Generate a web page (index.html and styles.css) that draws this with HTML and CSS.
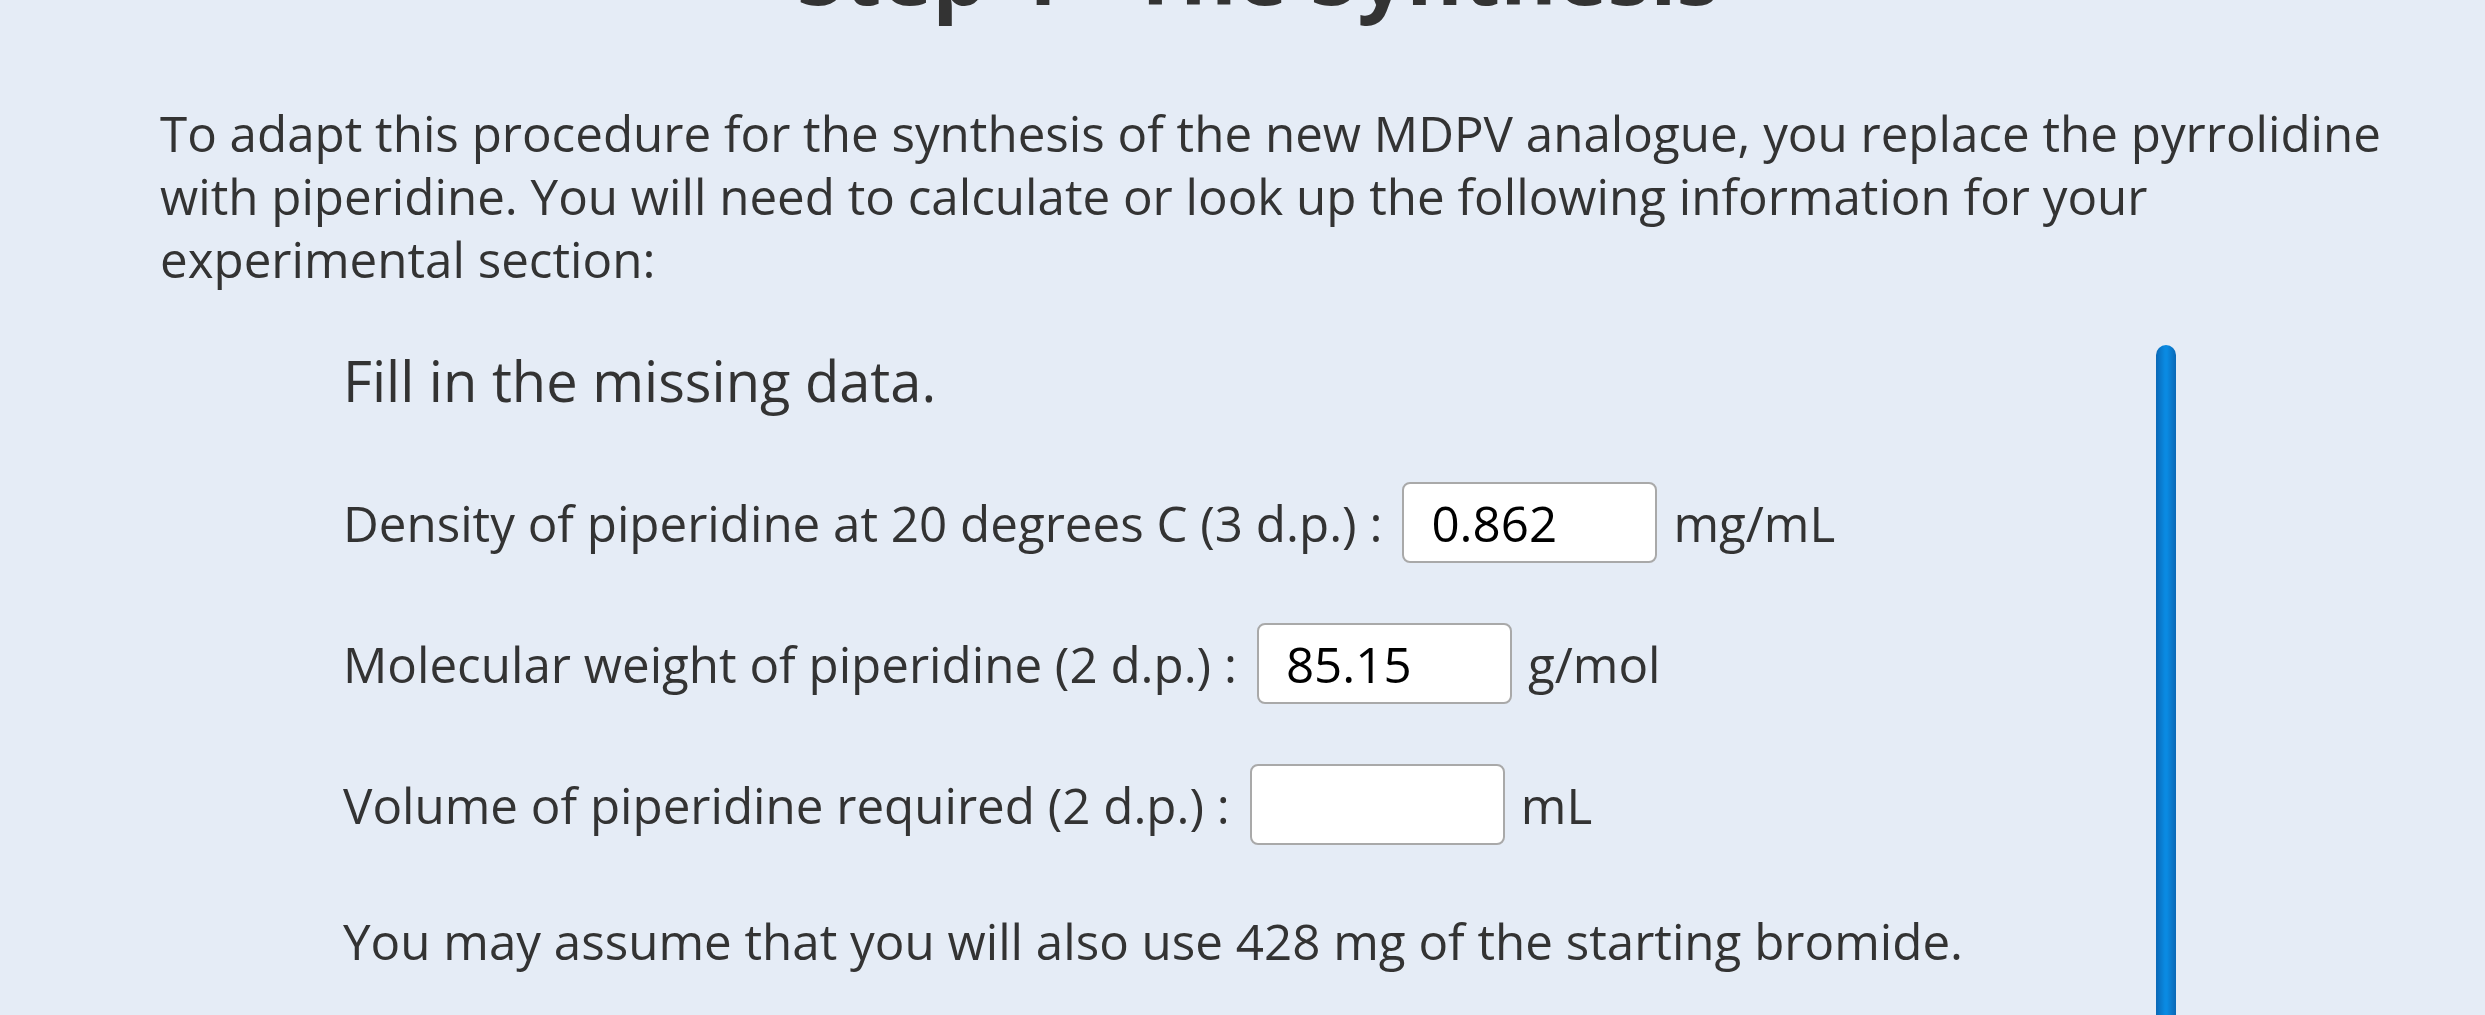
FILE: index.html
```html
<!DOCTYPE html>
<html lang="en">
<head>
  <meta charset="UTF-8" />
  <meta name="viewport" content="width=device-width, initial-scale=1.0"/>
  <title>Step 4 - The Synthesis</title>
  <link rel="stylesheet" href="styles.css">
</head>
<body>

  <main class="page">
    <h1 class="title">Step 4 - The Synthesis</h1>

    <p class="intro">To adapt this procedure for the synthesis of the new MDPV analogue, you replace the pyrrolidine with piperidine. You will need to calculate or look up the following information for your experimental section:</p>

    <section class="task">
      <div class="task-body">
        <h2>Fill in the missing data.</h2>

        <div class="field">
          <label for="density">Density of piperidine at 20 degrees C (3 d.p.) :</label>
          <input type="text" id="density" value="0.862" />
          <span class="unit">mg/mL</span>
        </div>

        <div class="field">
          <label for="mw">Molecular weight of piperidine (2 d.p.) :</label>
          <input type="text" id="mw" value="85.15" />
          <span class="unit">g/mol</span>
        </div>

        <div class="field">
          <label for="volume">Volume of piperidine required (2 d.p.) :</label>
          <input type="text" id="volume" value="" />
          <span class="unit">mL</span>
        </div>

        <p class="note">You may assume that you will also use 428 mg of the starting bromide.</p>
      </div>
      <div class="task-bar"></div>
    </section>
  </main>

</body>
</html>
```

FILE: styles.css
```css
body {
  margin: 0;
  font-family: "Open Sans", "Noto Sans", sans-serif;
  color: #333;
  background: #e5ecf6;
  overflow: hidden;
}

.page {
  padding: 0 90px 0 160px;
}

.title {
  margin: -80px 0 0;
  padding-right: 39px;
  text-align: center;
  font-size: 86px;
  font-weight: 700;
  line-height: 103px;
}

.intro {
  margin: 78px 0 0;
  font-size: 49.3px;
  line-height: 63px;
}

.task {
  display: flex;
  margin: 55px 219px 0 183px;
}

.task-body {
  flex: 1;
  padding-bottom: 200px;
}

.task-body h2 {
  margin: 0;
  font-size: 56px;
  font-weight: 400;
  line-height: 70px;
}

.field {
  display: flex;
  align-items: center;
  margin-top: 60px;
  font-size: 49.3px;
  line-height: 63px;
}

.field:first-of-type {
  margin-top: 67px;
}

.field input {
  box-sizing: border-box;
  width: 255px;
  height: 81px;
  margin: 0 16px 0 20px;
  padding: 0 27px;
  font-family: "Open Sans", "Noto Sans", sans-serif;
  font-size: 49.3px;
  color: #000;
  background: #fff;
  border: 2px solid #a9a9a9;
  border-radius: 8px;
  outline: none;
}

.note {
  margin: 64px 0 0;
  font-size: 49.3px;
  line-height: 63px;
}

.task-bar {
  width: 20px;
  border-radius: 10px 10px 0 0;
  background: linear-gradient(to right, #0a68b6, #0a8ae2 45%, #0a8ae2 55%, #0a68b6);
}
```
